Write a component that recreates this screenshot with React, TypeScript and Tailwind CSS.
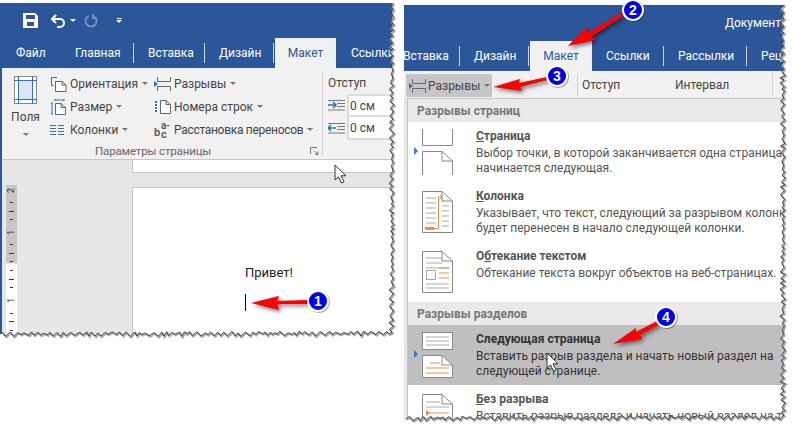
const font = { fontFamily: 'Roboto, "Open Sans", sans-serif' };

// deterministic torn paper edge
function tornPoints(x0: number, y0: number, x1: number, y1: number, seed: number) {
  let s = seed;
  const rnd = () => {
    s = (s * 9301 + 49297) % 233280;
    return s / 233280;
  };
  const len = Math.hypot(x1 - x0, y1 - y0);
  const nx = (y1 - y0) / len;
  const ny = (x1 - x0) / len;
  const pts: string[] = [];
  let t = 0;
  let flip = false;
  while (t < len) {
    const off = flip ? -0.5 - rnd() * 2.5 : 0.5 + rnd() * 1.5;
    const px = x0 + ((x1 - x0) * t) / len + nx * off;
    const py = y0 + ((y1 - y0) * t) / len + ny * off;
    pts.push(`${px.toFixed(1)},${py.toFixed(1)}`);
    t += 2 + rnd() * 3;
    flip = !flip;
  }
  return pts;
}

function TornEdges() {
  const left = [...tornPoints(392, 3, 392, 333, 7), ...tornPoints(392, 333, 0, 334, 21)];
  const right = [...tornPoints(783, 5, 783, 417, 13), ...tornPoints(783, 417, 404, 418, 33)];
  const leftFill = `M392,0 L${left.join(' L')} L0,425 L403,425 L403,0 Z`;
  const rightFill = `M783,0 L${right.join(' L')} L404,425 L794,425 L794,0 Z`;
  return (
    <svg className="absolute left-0 top-0" width="794" height="425">
      <path d={leftFill} fill="#fff" />
      <path d={rightFill} fill="#fff" />
      <polyline points={left.join(' ')} fill="none" stroke="#aaa" strokeWidth="2" transform="translate(1 1)" />
      <polyline points={right.join(' ')} fill="none" stroke="#aaa" strokeWidth="2" transform="translate(1 1)" />
      <polyline points={left.join(' ')} fill="none" stroke="#222" strokeWidth="0.8" />
      <polyline points={right.join(' ')} fill="none" stroke="#222" strokeWidth="0.8" />
    </svg>
  );
}

function Bubble({ x, y, n }: { x: number; y: number; n: number }) {
  return (
    <g>
      <circle cx={x + 1} cy={y + 1} r="11" fill="#000" opacity="0.3" />
      <circle cx={x} cy={y} r="10" fill="#0000e6" stroke="#fff" strokeWidth="2" />
      <text x={x} y={y + 5} textAnchor="middle" fontSize="14" fontWeight="700" fill="#fff" fontFamily="Liberation Sans, sans-serif">
        {n}
      </text>
    </g>
  );
}

function Annotations() {
  return (
    <svg className="absolute left-0 top-0" width="794" height="425">
      <g fill="#f00" className="drop-shadow-[2px_2px_2px_rgba(0,0,0,0.55)]">
        <polygon points="251,303 279,296 277,301 308,300 308,304 277,304 279,310" />
        <polygon points="568,46 586,27 587,33 621,13 623,16 591,37 596,40" />
        <polygon points="493,87 520,79 519,83 547,77 548,80 520,87 522,91" />
        <polygon points="613,344 636,328 636,332 657,321 659,325 640,335 642,339" />
      </g>
      <Bubble x={318} y={301} n={1} />
      <Bubble x={633} y={10} n={2} />
      <Bubble x={557} y={76} n={3} />
      <Bubble x={666} y={317} n={4} />
      <path d="M335 165 v15 l3.5 -3 l3 6 l2.5 -1.2 l-3 -6 h5 Z" fill="#fff" stroke="#333" strokeWidth="1" />
      <path d="M547 353 v15 l3.5 -3 l3 6 l2.5 -1.2 l-3 -6 h5 Z" fill="#fff" stroke="#333" strokeWidth="1" />
    </svg>
  );
}

function Caret({ className = '' }: { className?: string }) {
  return <span className={`inline-block border-x-[3px] border-t-[3px] border-x-transparent border-t-[#777] ${className}`} />;
}

function Tab({ label, active, sep, width }: { label: string; active?: boolean; sep?: boolean; width: string }) {
  return (
    <div className={`flex h-full shrink-0 items-center ${width} ${active ? 'justify-center bg-[#f1f1f1] text-[#2b579a]' : 'text-white'}`}>
      <span>{label}</span>
      {sep && <span className="ml-auto h-[20px] w-px bg-[#c9d5e6]" />}
    </div>
  );
}

function OrientationIcon() {
  return (
    <svg width="17" height="16" fill="none" stroke="#666">
      <path d="M3.5 9.5 H1.5 V1.5 H7" />
      <path d="M5.5 15.5 V5.5 H12 L16 9 V15.5 Z M12 5.5 V9 H16" fill="#fff" />
    </svg>
  );
}

function SizeIcon() {
  return (
    <svg width="16" height="17" fill="none">
      <path d="M5 1 V3 M14 1 V3 M5 2 H14 M1 5 H3 M1 16 H3 M2 5 V16" stroke="#2b72b8" />
      <path d="M5.5 16.5 V5.5 H11 L15.5 9.5 V16.5 Z M11 5.5 V9.5 H15.5" stroke="#666" fill="#fff" />
    </svg>
  );
}

function ColumnsIcon() {
  return (
    <svg width="14" height="12" stroke="#2b72b8">
      <path d="M0 1.5 H6 M0 4.5 H6 M0 7.5 H6 M0 10.5 H6 M8 1.5 H14 M8 4.5 H14 M8 7.5 H14 M8 10.5 H14" />
    </svg>
  );
}

function BreaksIcon({ stroke = '#666' }: { stroke?: string }) {
  return (
    <svg width="17" height="16" fill="none">
      <path d="M3.5 1 V5.5 H16.5 V1 M3.5 15 V10.5 H16.5 V15" stroke={stroke} />
      <path d="M0 5 L4 8 L0 11 Z" fill="#2b72b8" />
    </svg>
  );
}

function LineNumbersIcon() {
  return (
    <svg width="17" height="14" fill="none">
      <path d="M2 1 V13" stroke="#2b72b8" strokeDasharray="2 1" strokeWidth="2" />
      <path d="M6.5 13.5 V0.5 H12 L16.5 4.5 V13.5 Z M12 0.5 V4.5 H16.5" stroke="#666" fill="#fff" />
    </svg>
  );
}

function HyphenIcon() {
  return (
    <span className="relative block h-[16px] w-[17px] font-semibold text-[#555]">
      <span className="absolute bottom-0 left-0 text-[11px] leading-[11px]">b</span>
      <span className="absolute bottom-[-1px] left-[7px] text-[11px] leading-[8px]">c</span>
      <span className="absolute left-[7px] top-0 text-[10px] leading-[8px]">a-</span>
    </span>
  );
}

function PageMarginsIcon() {
  return (
    <svg width="23" height="28" fill="none">
      <rect x="0.5" y="0.5" width="22" height="27" fill="#fff" stroke="#888" />
      <rect x="4.5" y="4.5" width="14" height="19" fill="#dbe7f4" stroke="none" />
      <path d="M4.5 0 V28 M18.5 0 V28 M0 4.5 H23 M0 23.5 H23" stroke="#2b72b8" />
    </svg>
  );
}

function IndentIcon({ flip }: { flip?: boolean }) {
  return (
    <svg width="17" height="13" fill="none">
      <path d="M0 1.5 H17 M9 4.5 H17 M9 7.5 H17 M0 11 H17" stroke="#777" />
      <path d={flip ? 'M1 6 H8 M3 3 L0 6 L3 9' : 'M0 6 H7 M5 3 L8 6 L5 9'} stroke="#2b72b8" strokeWidth="1.5" />
    </svg>
  );
}

function RibbonItem({ icon, label, hyph }: { icon: React.ReactNode; label: string; hyph?: boolean }) {
  return (
    <div className="flex h-[23px] items-center whitespace-nowrap">
      <span className="flex w-[20px] shrink-0 items-center justify-start">{icon}</span>
      <span className={hyph ? 'tracking-[-0.3px]' : ''}>{label}</span>
      <Caret className="ml-[4px]" />
    </div>
  );
}

function LeftWindow() {
  return (
    <div className="mt-[3px] flex h-[331px] w-[392px] shrink-0 flex-col overflow-hidden border-l-2 border-[#2b579a] text-[#444]">
      {/* title bar */}
      <div className="h-[65px] shrink-0 bg-[#2b579a]">
        <div className="flex h-[35px] items-center pl-[21px]">
          <svg width="15" height="15" fill="#fff">
            <path fillRule="evenodd" d="M0 0 H12 L15 3 V15 H0 Z M3 2 V6 H12 V2 Z M4 9 V13 H11 V9 Z" />
          </svg>
          <svg className="ml-[13px]" width="16" height="14" fill="none" stroke="#fff" strokeWidth="2">
            <path d="M1 5 H9 A4 4 0 0 1 9 13 H6" />
            <path d="M5 1 L1 5 L5 9" />
          </svg>
          <Caret className="ml-[3px] border-t-white" />
          <svg className="ml-[8px]" width="14" height="14" fill="none" stroke="#7390bb" strokeWidth="2">
            <path d="M5 2 A5.5 5.5 0 1 0 9 2 M9 0 V4 H13" />
          </svg>
          <div className="ml-[18px] flex flex-col items-center gap-[1px]">
            <span className="h-px w-[5px] bg-white" />
            <Caret className="border-t-white" />
          </div>
        </div>
        <div className="flex h-[30px] items-center pl-[3px] text-[12px]">
          <Tab label="Файл" width="w-[48px] pl-[11px]" />
          <Tab label="Главная" width="w-[81px] pl-[22px]" sep />
          <Tab label="Вставка" width="w-[71px] pl-[14px]" sep />
          <Tab label="Дизайн" width="w-[69px] pl-[14px]" sep />
          <span className="w-[1px] shrink-0" />
          <Tab label="Макет" width="w-[61px]" active />
          <Tab label="Ссылки" width="w-[60px] pl-[15px]" />
        </div>
      </div>
      {/* ribbon */}
      <div className="relative flex h-[92px] shrink-0 border-b border-[#c6c6c6] bg-[#f1f1f1] text-[12px]">
        <div className="flex w-[48px] shrink-0 flex-col items-center pr-[1px] pt-[8px]">
          <PageMarginsIcon />
          <span className="mt-[5px] leading-[16px]">Поля</span>
          <Caret className="mt-[8px]" />
        </div>
        <div className="w-[104px] shrink-0 pt-[4px]">
          <RibbonItem icon={<OrientationIcon />} label="Ориентация" />
          <RibbonItem icon={<SizeIcon />} label="Размер" />
          <RibbonItem icon={<ColumnsIcon />} label="Колонки" />
        </div>
        <div className="w-[168px] shrink-0 pt-[4px]">
          <RibbonItem icon={<BreaksIcon />} label="Разрывы" />
          <RibbonItem icon={<LineNumbersIcon />} label="Номера строк" />
          <RibbonItem icon={<HyphenIcon />} label="Расстановка переносов" hyph />
        </div>
        <div className="my-[4px] w-px shrink-0 bg-[#d0d0d0]" />
        <div className="shrink-0 pl-[5px] pt-[6px]">
          <div className="h-[19px] leading-[19px]">Отступ</div>
          <div className="mt-[1px] flex h-[23px] items-center">
            <IndentIcon />
            <div className="ml-[2px] flex h-[23px] w-[60px] items-center border-2 border-[#dcdcdc] bg-white pl-[1px]">0 см</div>
          </div>
          <div className="flex h-[23px] items-center">
            <IndentIcon flip />
            <div className="ml-[2px] flex h-[23px] w-[60px] items-center border-x-2 border-b-2 border-[#dcdcdc] bg-white pl-[1px]">0 см</div>
          </div>
        </div>
        <div className="absolute bottom-0 left-[93px] text-[11.5px] leading-[16px] tracking-[-0.15px] text-[#666]">Параметры страницы</div>
        <svg className="absolute bottom-[4px] left-[308px]" width="9" height="8" fill="none" stroke="#777">
          <path d="M0.5 7 V0.5 H7" />
          <path d="M4 4 L8 7.5 M8 4.5 V7.5 H5" />
        </svg>
      </div>
      {/* document */}
      <div className="flex flex-1 bg-[#e6e6e6]">
        <div className="w-[130px] shrink-0 pl-[4px] pt-[25px]">
          <Ruler />
        </div>
        <div className="flex-1">
          <div className="h-[13px] border-b border-l border-[#c6c6c6] bg-white" />
          <div className="h-[14px]" />
          <div className="h-[200px] border-l border-t border-[#c6c6c6] bg-white pl-[112px] pt-[75px] text-[13px] text-[#222]">
            <div className="leading-[20px]">Привет!</div>
            <div className="mt-[11px] h-[17px] w-px bg-black" />
          </div>
        </div>
      </div>
    </div>
  );
}

function Ruler() {
  const dot = <span className="h-px w-[3px] bg-[#333]" />;
  const dash = <span className="h-px w-[5px] bg-[#333]" />;
  const num = (n: string) => <span className="-rotate-90 text-[9px] leading-[9px] text-[#333]">{n}</span>;
  return (
    <div className="flex h-[150px] w-[11px] flex-col">
      <div className="flex h-[78px] flex-col items-center justify-between bg-[#c6c6c6] py-[1px]">
        {num('2')}
        {dot}
        {dash}
        {dot}
        {num('1')}
        {dot}
        {dash}
        {dot}
      </div>
      <div className="mt-px flex h-[71px] flex-col items-center justify-between bg-white pb-[4px] pt-[6px]">
        {dot}
        {dash}
        {dot}
        {num('1')}
        {dot}
        {dash}
        {dot}
      </div>
    </div>
  );
}

function IconPageBreak() {
  return (
    <svg width="33" height="46" fill="none">
      <path d="M0.5 0 V16.5 H30.5 V0" stroke="#888" />
      <path d="M0.5 46 V22.5 H20 L30.5 32 V46 M20 22.5 V32 H30.5" stroke="#888" />
    </svg>
  );
}

function IconColumn() {
  return (
    <svg width="33" height="42" fill="none">
      <path d="M0.5 41.5 V0.5 H20 L30.5 10 V41.5 Z M20 0.5 V10 H30.5" stroke="#888" fill="#fff" />
      <path d="M4 7 H14 M4 12 H14 M4 17 H14 M4 22 H14 M4 27 H14 M4 32 H14 M20 15 H27 M20 20 H27 M20 25 H27 M20 30 H27 M20 35 H27" stroke="#aaa" />
      <path d="M3 37.5 H12 " stroke="#e8914a" strokeWidth="3" />
      <path d="M12 37.5 H16.5 V6 H20 M18 4 L20 6 L18 8" stroke="#e8914a" />
    </svg>
  );
}

function IconWrap() {
  return (
    <svg width="33" height="42" fill="none">
      <path d="M0.5 41.5 V0.5 H20 L30.5 10 V41.5 Z M20 0.5 V10 H30.5" stroke="#888" fill="#fff" />
      <path d="M4 7 H20 M4 12 H20 M4 17 H27 M4 37 H27 M4 33 H27" stroke="#aaa" />
      <rect x="4.5" y="19.5" width="9" height="9" stroke="#aaa" />
      <path d="M17 17 H27 M17 22 H27 M17 27 H27" stroke="#e8914a" />
    </svg>
  );
}

function IconNextPage() {
  return (
    <svg width="33" height="46" fill="none">
      <rect x="0.5" y="0.5" width="30" height="17" fill="#fff" stroke="#888" />
      <path d="M4 5 H27 M4 9 H27 M4 13 H27" stroke="#aaa" />
      <path d="M0.5 45.5 V23.5 H20 L30.5 33 V45.5 Z" fill="#fff" stroke="#888" />
      <path d="M20 23.5 V33 H30.5" stroke="#888" />
      <path d="M8 31 H18 M4 36 H27 M4 41 H27" stroke="#e8914a" />
    </svg>
  );
}

function IconContinuous() {
  return (
    <svg width="33" height="42" fill="none">
      <path d="M0.5 42 V0.5 H20 L30.5 10 V42" fill="#fff" stroke="#888" />
      <path d="M20 0.5 V10 H30.5" stroke="#888" />
      <path d="M4 8 H18 M4 13 H27" stroke="#aaa" />
      <path d="M4 19 H27 M4 24 H27" stroke="#e8914a" />
      <path d="M4 16 L8 19 L4 22 Z" fill="#e8914a" />
    </svg>
  );
}

function MenuRow({
  icon,
  title,
  desc,
  selected,
  marker,
}: {
  icon: React.ReactNode;
  title: [string, string, string];
  desc: string[];
  selected?: boolean;
  marker?: boolean;
}) {
  return (
    <div className={`relative flex h-[60px] shrink-0 whitespace-nowrap ${selected ? 'bg-[#bfbfbf] text-[#333]' : 'bg-white text-[#555]'}`}>
      <div className="flex w-[68px] shrink-0 items-center pl-[14px]">{icon}</div>
      {marker && <span className="absolute left-[6px] top-[25px] border-y-[4px] border-l-[4px] border-y-transparent border-l-[#3c78c2]" />}
      <div className="pt-[7px] text-[12px] leading-[15px]">
        <div className={`mb-[2px] font-bold ${selected ? 'text-[#333]' : 'text-[#555]'}`}>
          {title[0]}
          <span className="underline">{title[1]}</span>
          {title[2]}
        </div>
        {desc.map((d) => (
          <div key={d}>{d}</div>
        ))}
      </div>
    </div>
  );
}

function MenuHeader({ label }: { label: string }) {
  return <div className="flex h-[23px] shrink-0 items-center bg-[#e9e9e9] pl-[9px] text-[12px] font-bold text-[#777]">{label}</div>;
}

function RightWindow() {
  return (
    <div className="ml-[12px] mt-[5px] flex h-[414px] w-[380px] shrink-0 flex-col overflow-hidden text-[#444]">
      <div className="h-[66px] shrink-0 bg-[#2b579a]">
        <div className="flex h-[36px] items-center pl-[321px] text-[12px] text-white">Документ1</div>
        <div className="flex h-[30px] items-center whitespace-nowrap text-[12px]">
          <Tab label="Вставка" width="w-[56px] [&>span:first-child]:-ml-[1px]" sep />
          <Tab label="Дизайн" width="w-[69px] pl-[14px]" sep />
          <span className="w-[1px] shrink-0" />
          <Tab label="Макет" width="w-[62px]" active />
          <Tab label="Ссылки" width="w-[72px] pl-[14px]" sep />
          <Tab label="Рассылки" width="w-[83px] pl-[14px]" sep />
          <Tab label="Реце" width="w-[37px] pl-[14px]" />
        </div>
      </div>
      <div className="flex h-[27px] shrink-0 bg-[#f1f1f1] text-[12px]">
        <div className="ml-[2px] mt-[3px] flex h-[23px] w-[86px] shrink-0 items-center bg-[#c6c6c6] pl-[3px]">
          <BreaksIcon />
          <span className="ml-[2px]">Разрывы</span>
          <Caret className="ml-[4px]" />
        </div>
        <div className="my-[2px] ml-[85px] w-px bg-[#d0d0d0]" />
        <div className="ml-[4px] w-[93px] pt-[5px] leading-[18px]">Отступ</div>
        <div className="w-[97px] pt-[5px] leading-[18px]">Интервал</div>
        <div className="my-[2px] w-px bg-[#d0d0d0]" />
      </div>
      <div className="flex flex-1 bg-[#e6e6e6] pl-[3px]">
        <div className="flex flex-1 flex-col overflow-hidden border-l border-t border-[#c6c6c6] bg-white">
          <MenuHeader label="Разрывы страниц" />
          <MenuRow
            icon={<IconPageBreak />}
            title={['', 'С', 'траница']}
            marker
            desc={['Выбор точки, в которой заканчивается одна страница и', 'начинается следующая.']}
          />
          <MenuRow
            icon={<IconColumn />}
            title={['', 'К', 'олонка']}
            desc={['Указывает, что текст, следующий за разрывом колонки,', 'будет перенесен в начало следующей колонки.']}
          />
          <MenuRow icon={<IconWrap />} title={['О', 'б', 'текание текстом']} desc={['Обтекание текста вокруг объектов на веб-страницах.']} />
          <MenuHeader label="Разрывы разделов" />
          <MenuRow
            icon={<IconNextPage />}
            title={['Сле', 'д', 'ующая страница']}
            selected
            marker
            desc={['Вставить разрыв раздела и начать новый раздел на', 'следующей странице.']}
          />
          <MenuRow icon={<IconContinuous />} title={['', 'Б', 'ез разрыва']} desc={['Вставить разрыв раздела и начать новый раздел на той']} />
        </div>
      </div>
    </div>
  );
}

export default function App() {
  return (
    <div className="relative flex h-[425px] w-[794px] items-start overflow-hidden bg-white" style={font}>
      <LeftWindow />
      <RightWindow />
      <TornEdges />
      <Annotations />
    </div>
  );
}
